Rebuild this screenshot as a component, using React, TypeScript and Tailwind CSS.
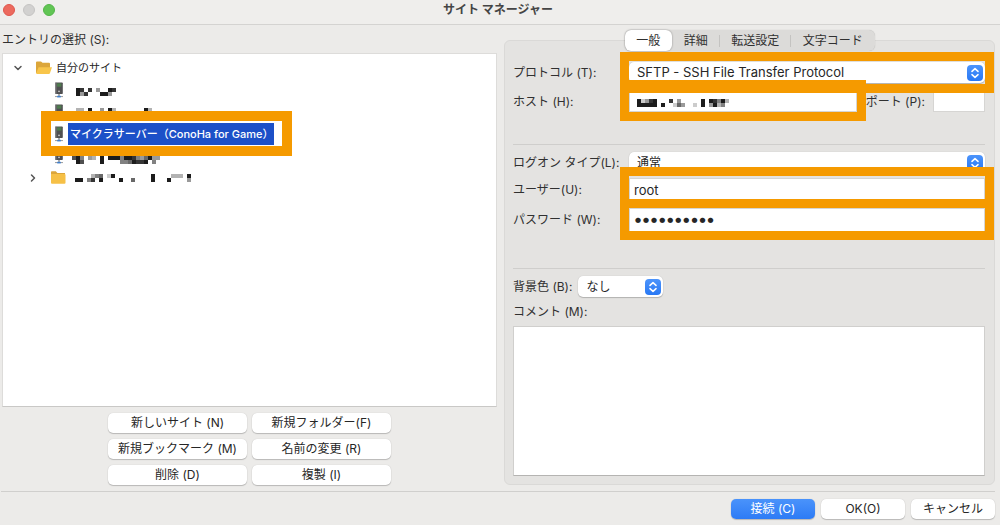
import { ReactNode } from "react";
import { ChevronDown, ChevronRight } from "lucide-react";
import clsx from "clsx";

const FIELD =
  "w-full border border-[#d6d5d3] bg-white px-1 text-[#262626] outline-none";

const tabs = ["一般", "詳細", "転送設定", "文字コード"];

const siteActions = [
  "新しいサイト (N)",
  "新規フォルダー(F)",
  "新規ブックマーク (M)",
  "名前の変更 (R)",
  "削除 (D)",
  "複製 (I)",
];

// Pixelated stand-in for a hidden name: each digit is the darkness of a 4px cell.
function Mosaic({ rows }: { rows: string[] }) {
  const cols = Math.max(...rows.map((r) => r.length));
  return (
    <svg
      width={cols * 4}
      height={rows.length * 4}
      shapeRendering="crispEdges"
      aria-hidden="true"
    >
      {rows.map((row, y) =>
        row
          .split("")
          .map((c, x) =>
            c === "." ? null : (
              <rect
                key={`${x}-${y}`}
                x={x * 4}
                y={y * 4}
                width="4"
                height="4"
                fill="#1c1c1c"
                opacity={Number(c) / 9}
              />
            )
          )
      )}
    </svg>
  );
}

function ServerIcon() {
  return (
    <svg width="10" height="16" viewBox="0 0 10 16" className="shrink-0">
      <rect x="1.2" y="0.5" width="7.6" height="11.5" rx="0.8" fill="#505052" />
      <rect x="1.2" y="0.5" width="1.2" height="11.5" fill="#858587" />
      <rect x="3" y="1.6" width="4.4" height="1" fill="#4f9a4c" />
      <rect x="3" y="3.4" width="4.4" height="1" fill="#4f9a4c" />
      <circle cx="5" cy="9.4" r="0.8" fill="#d5d5d5" />
      <path d="M5 12v2" stroke="#777" strokeWidth="1.2" />
      <path d="M1 14.6h8" stroke="#9a9a9a" strokeWidth="1" />
      <path d="M3.2 14.6h3.6" stroke="#3d7fd0" strokeWidth="1.6" />
    </svg>
  );
}

function FolderIcon({ open = false }: { open?: boolean }) {
  return (
    <svg width="16" height="14" viewBox="0 0 16 14" className="shrink-0">
      {open ? (
        <>
          <path
            d="M0 1.5Q0 .5 1 .5h4l1.5 1.3H13q1 0 1 1V12H0z"
            fill="#dca63a"
          />
          <path d="M2.6 6.2H16L14 12q-.3.9-1 .9H1q-1 0-.8-1z" fill="#f8c54a" />
        </>
      ) : (
        <>
          <path d="M0 1Q0 .3.8.3h4L6.4 2H14v3H0z" fill="#dca63a" />
          <path d="M0 3h13.5q1 0 1 1v7.8q0 1-1 1H1q-1 0-1-1z" fill="#f6c046" />
        </>
      )}
    </svg>
  );
}

function Stepper() {
  return (
    <span className="pointer-events-none absolute top-1/2 right-0.5 flex size-4 -translate-y-1/2 items-center justify-center rounded bg-gradient-to-b from-[#4c94fb] to-[#2878f4]">
      <svg width="8" height="12" viewBox="0 0 8 12" fill="none">
        <path
          d="M1 4.4 4 1.6l3 2.8M1 7.6l3 2.8 3-2.8"
          stroke="#fff"
          strokeWidth="1.5"
          strokeLinecap="round"
          strokeLinejoin="round"
        />
      </svg>
    </span>
  );
}

function Select({ id, value }: { id: string; value: string }) {
  return (
    <div className="relative w-full">
      <select
        id={id}
        className={clsx(
          "block h-[21px] w-full appearance-none rounded-[5px] bg-white pr-6 pl-2 text-[#262626] shadow-[0_1px_1px_rgba(0,0,0,0.2),0_0_1px_rgba(0,0,0,0.2)] outline-none",
          id === "protocol" ? "text-[13px]" : "text-xs"
        )}
      >
        <option>{value}</option>
      </select>
      <Stepper />
    </div>
  );
}

function Highlight({ className }: { className: string }) {
  return (
    <span
      className={clsx(
        "pointer-events-none absolute z-10 border-[#f59a00]",
        className
      )}
    />
  );
}

function Label({ id, children }: { id: string; children: ReactNode }) {
  return (
    <label htmlFor={id} className="w-[116px] shrink-0 whitespace-nowrap">
      {children}
    </label>
  );
}

function PushButton({
  children,
  primary = false,
}: {
  children: ReactNode;
  primary?: boolean;
}) {
  return (
    <button
      className={clsx(
        "h-5 rounded-[5px] text-center whitespace-nowrap shadow-[0_1px_1px_rgba(0,0,0,0.2),0_0_1px_rgba(0,0,0,0.2)]",
        primary
          ? "bg-gradient-to-b from-[#4a93fb] to-[#2d7bf5] text-white"
          : "bg-white text-[#262626]"
      )}
    >
      {children}
    </button>
  );
}

function SiteTree() {
  return (
    <ul
      aria-labelledby="entries"
      className="flex-1 border border-[#dddcda] border-b-[#c9c8c6] bg-white pt-[3px] text-[11px] text-[#262626]"
    >
      <li className="flex h-[22px] items-center pl-[9px]">
        <ChevronDown size={12} strokeWidth={3} className="mr-3 text-[#555]" />
        <FolderIcon open />
        <span className="ml-1">自分のサイト</span>
      </li>
      <li className="flex h-[22px] items-center gap-3 pl-[51px]">
        <ServerIcon />
        <Mosaic rows={["", "98.8.4..98", "948...994."]} />
      </li>
      <li className="flex h-[22px] items-center gap-3 pl-[51px]">
        <ServerIcon />
        <Mosaic rows={["33.9..4.93.......93", "94.8.9..94...8.9.44"]} />
      </li>
      <li className="relative flex h-[22px] items-center gap-1 pl-[51px]">
        <ServerIcon />
        <span className="flex h-full w-[206px] items-center bg-[#1c50c8] pl-0.5 font-medium whitespace-nowrap text-white">
          マイクラサーバー（ConoHa for Game）
        </span>
        <Highlight className="-top-3 left-[38px] h-[45px] w-[251px] border-10" />
      </li>
      <li className="flex h-[22px] items-center gap-2 pl-[51px]">
        <ServerIcon />
        <Mosaic
          rows={["", "", "795.43.9.9995998546944", ".97....9....5569889.5"]}
        />
      </li>
      <li className="flex h-[22px] items-center gap-2 pl-6">
        <ChevronRight size={12} strokeWidth={3} className="mr-1 text-[#555]" />
        <FolderIcon />
        <Mosaic
          rows={[
            "....356.29.........9....333.9",
            "99.58.9....9..6....9...9....4",
          ]}
        />
      </li>
    </ul>
  );
}

function GeneralPanel() {
  return (
    <div className="-mt-[11px] flex flex-1 flex-col rounded-md border border-[#dad9d7] bg-[#e4e3e1] pt-[21px] pr-[9px] pb-2 pl-2">
      <div className="flex items-center">
        <Label id="protocol">プロトコル (T):</Label>
        <div className="relative flex-1">
          <Select id="protocol" value="SFTP - SSH File Transfer Protocol" />
          <Highlight className="-inset-x-[9px] -top-[10px] h-[41px] border-9" />
        </div>
      </div>

      <div className="mt-2 flex items-center">
        <Label id="host">ホスト (H):</Label>
        <div className="relative mr-[9px] flex-1">
          <input id="host" className={clsx(FIELD, "block h-[21px]")} />
          <span className="absolute top-2 left-2">
            <Mosaic
              rows={["92489...8.4.....9.98593", "99999.9..264..2.9.4935."]}
            />
          </span>
          <Highlight className="-inset-x-[9px] -top-[11px] h-[41px] border-9" />
        </div>
        <label htmlFor="port" className="mr-2 whitespace-nowrap">
          ポート (P):
        </label>
        <input id="port" className={clsx(FIELD, "h-[21px] max-w-[52px]")} />
      </div>

      <hr className="mt-8 border-[#cfcecc]" />

      <div className="mt-[7px] flex items-center">
        <Label id="logon">ログオン タイプ(L):</Label>
        <Select id="logon" value="通常" />
      </div>

      <div className="mt-[5px] flex items-center">
        <Label id="user">ユーザー(U):</Label>
        <div className="relative flex-1">
          <input
            id="user"
            defaultValue="root"
            className={clsx(FIELD, "block h-6 text-[13px]")}
          />
          <Highlight className="-inset-x-[9px] -top-[11px] h-[41px] border-9" />
        </div>
      </div>

      <div className="mt-[6px] flex items-center">
        <Label id="password">パスワード (W):</Label>
        <div className="relative flex-1">
          <input
            id="password"
            type="password"
            defaultValue="abcdefghij"
            className={clsx(FIELD, "block h-6 pb-0.5 text-[17px] font-bold")}
          />
          <Highlight className="-inset-x-[9px] -top-[9px] h-[41px] border-9" />
        </div>
      </div>

      <hr className="mt-9 border-[#cfcecc]" />

      <div className="mt-[7px] flex items-center gap-1.5">
        <label htmlFor="color" className="whitespace-nowrap">
          背景色 (B):
        </label>
        <div className="w-[85px]">
          <Select id="color" value="なし" />
        </div>
      </div>

      <label htmlFor="comment" className="mt-[5px] h-6 leading-5">
        コメント (M):
      </label>
      <textarea
        id="comment"
        className="flex-1 resize-none border border-[#d0cfcd] border-b-[#b5b4b2] bg-white outline-none"
      />
    </div>
  );
}

export default function App() {
  return (
    <div className="flex min-h-screen flex-col bg-[#ecebe9] font-[Inter,'Noto_Sans_CJK_JP',sans-serif] text-xs text-[#303030]">
      <header className="relative flex h-[25px] items-center justify-center border-b border-[#d4d3d1] bg-[#efeeec] pr-1 pb-[5px]">
        <div className="absolute top-1 left-[3px] flex gap-2">
          <button
            aria-label="閉じる"
            className="size-3 rounded-full border border-[#e0564c] bg-[#ec6a5e]"
          />
          <button
            aria-label="最小化"
            className="size-3 rounded-full border border-[#c5c4c3] bg-[#d2d1d0]"
          />
          <button
            aria-label="拡大"
            className="size-3 rounded-full border border-[#53b548] bg-[#61c554]"
          />
        </div>
        <h1 className="font-bold text-[#454545]">サイト マネージャー</h1>
      </header>

      <main className="grid flex-1 grid-cols-[495fr_491fr] gap-[7px] pr-[5px] pb-[6px] pl-0.5">
        <section className="flex flex-col">
          <h2 id="entries" className="h-7 pt-[5px] leading-5">
            エントリの選択 (S):
          </h2>
          <SiteTree />
          <div className="mx-auto mt-1.5 grid grid-cols-[139px_139px] gap-x-[5px] gap-y-1.5">
            {siteActions.map((a) => (
              <PushButton key={a}>{a}</PushButton>
            ))}
          </div>
        </section>

        <section className="flex flex-col pt-[5px]">
          <div
            role="tablist"
            className="relative z-10 flex h-[21px] w-[250px] self-center rounded-md bg-[#dcdbd9] shadow-[0_0_1px_rgba(0,0,0,0.25)]"
          >
            {tabs.map((tab, i) => (
              <button
                key={tab}
                role="tab"
                aria-selected={i === 0}
                className={clsx(
                  "grow px-[11px] whitespace-nowrap",
                  i === 0
                    ? "rounded-md bg-white shadow-[0_0_2px_rgba(0,0,0,0.4)]"
                    : "bg-[linear-gradient(#c4c3c1,#c4c3c1)] bg-[length:1px_12px] bg-right bg-no-repeat last:bg-none"
                )}
              >
                {tab}
              </button>
            ))}
          </div>
          <GeneralPanel />
        </section>
      </main>

      <footer className="mr-[5px] ml-px grid grid-cols-[84px_84px_84px] justify-end gap-[6px] border-t border-[#d0cfcd] pt-[7px] pb-[6px]">
        <PushButton primary>接続 (C)</PushButton>
        <PushButton>OK(O)</PushButton>
        <PushButton>キャンセル</PushButton>
      </footer>
    </div>
  );
}
